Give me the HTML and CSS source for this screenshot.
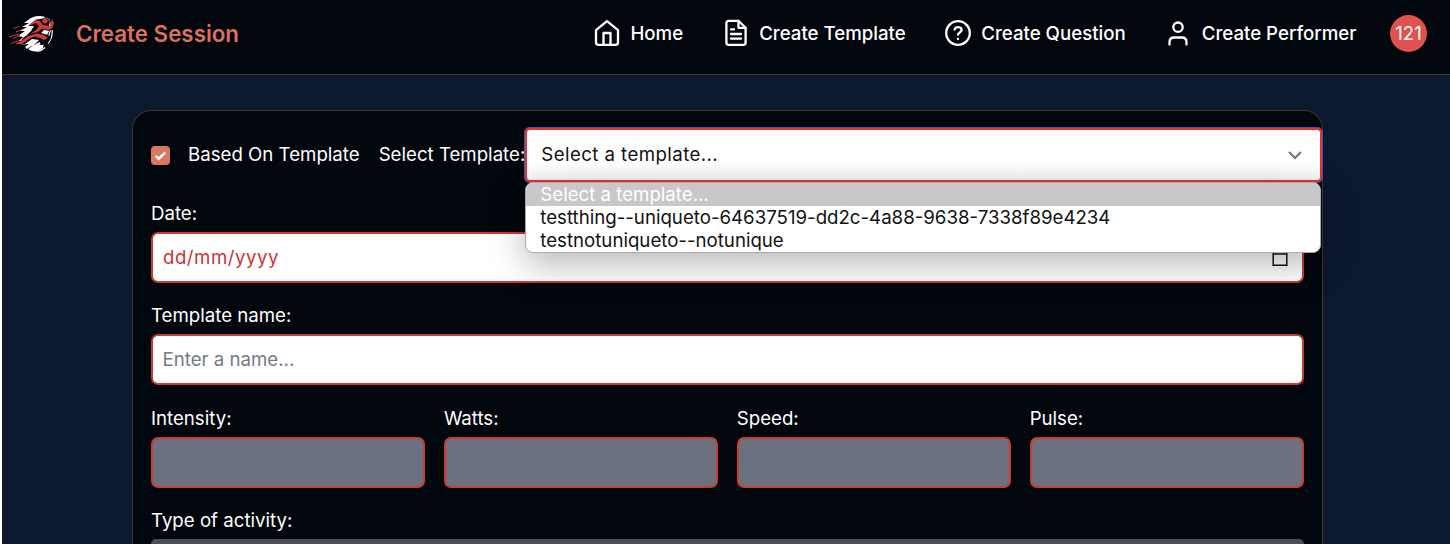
FILE: index.html
```html
<!DOCTYPE html>
<html lang="en">
<head>
<meta charset="utf-8">
<title>Create Session</title>
<link rel="stylesheet" href="styles.css">
</head>
<body>
<header class="topbar">
  <svg class="logo" viewBox="7 12 47 41" fill="none">
    <path fill="#fff" d="M27 19Q32 15 38 15Q45 15 49 19L50 26L46 34L48 36L43 41L42 47L36 50.500Q31 51 27 48L33 45L24 46L28 43L18 44L22 41L18 40L22 36L17 35L24 30L19 30L26 26L21 26L28 22L23 22Z"/>
    <path d="M51.300 29Q51.500 37 47 42.500M49.500 29Q48.500 35 44.500 40M44 46.500Q41 49.500 36 50.500" stroke="#fff" stroke-width="1.200"/>
    <path fill="#02060d" d="M27 25L35 18.500L40 18L45 16L49 20L48 25L52 24L49 30L43 29L40 32L47 34L50 37L47 42L41 44L33 44L38 39L31 38L24 43L15 45L22 37L26 34L30 30L33 25Z"/>
    <g fill="#d03a3c">
      <path d="M27 25L34 19L39 20L42 24L49 25L51 18L53 22L51 27.500L47 29L41 27.500L37 31L29 33L35 29L38 25L35 22Z"/>
      <path d="M20 40L27 35L36 32.500L43 34L47 37L43 39L39 37L34 35.500L28 38L21 43L15 43Z"/>
      <circle cx="44" cy="19.800" r="2.700"/>
    </g>
    <path d="M25 47L34 41M29 48L39 42" stroke="#fff" stroke-width="2.600"/>
    <path d="M12.500 27.500L18 25.500M15 31L21 28.500M8 36L18 33M12 37.500L19 34.500M10 42.500L18 39.500M15 43L21 40" stroke="#d03a3c" stroke-width="1"/>
  </svg>
  <h1 class="page-title">Create Session</h1>
  <nav class="nav">
    <a class="nav-link home"><svg class="icon" viewBox="0 0 28 28"><path d="M3 11.2 14 2.2l11 9v12q0 2.6-2.6 2.6H5.6Q3 25.800 3 23.200Z"/><path d="M10.500 25.500V14h7v11.500"/></svg><span>Home</span></a>
    <a class="nav-link template"><svg class="icon" viewBox="0 0 28 28"><path d="M16.500 1.800H6.800q-2.400 0-2.400 2.400v19.200q0 2.400 2.400 2.400h14.400q2.400 0 2.400-2.400V8.800Z"/><path d="M16.500 1.800v7h7M9 10.300h3M9 15h10M9 19.700h10"/></svg><span>Create Template</span></a>
    <a class="nav-link question"><svg class="icon" viewBox="0 0 28 28"><circle cx="14" cy="14" r="11.800"/><path d="M10.600 10.500c1.100-3.700 7-3 7 .6 0 2.200-3.500 2.300-3.500 4.600M14 20h.02"/></svg><span>Create Question</span></a>
    <a class="nav-link performer"><svg class="icon" viewBox="0 0 28 28"><circle cx="14" cy="8.200" r="4.700"/><path d="M5.500 25.500v-2.300q0-4.700 4.700-4.700h7.600q4.700 0 4.700 4.700v2.300"/></svg><span>Create Performer</span></a>
  </nav>
  <div class="avatar">121</div>
</header>
<main class="page">
  <form class="card">
    <div class="template-row">
      <span class="checkbox"><svg viewBox="0 0 16 16"><path d="m4 8.300 2.600 2.500L12 5.300"/></svg></span>
      <label class="based-on">Based On Template</label>
      <label class="select-label">Select Template:</label>
      <div class="select">
        <span class="value">Select a template...</span>
        <svg class="chevron" viewBox="0 0 16 10"><path d="m2 2 6 6 6-6"/></svg>
        <ul class="options">
          <li class="option selected">Select a template...</li>
          <li class="option">testthing--uniqueto-64637519-dd2c-4a88-9638-7338f89e4234</li>
          <li class="option">testnotuniqueto--notunique</li>
        </ul>
      </div>
    </div>
    <div class="field">
      <label>Date:</label>
      <div class="input date"><span>dd/mm/yyyy</span><svg class="calendar" viewBox="0 0 16 18"><path d="M1.200 3h13.600v13.300H1.200zM1.200 5h13.600M4 1v2M12 1v2"/></svg></div>
    </div>
    <div class="field">
      <label>Template name:</label>
      <div class="input placeholder">Enter a name...</div>
    </div>
    <div class="metrics">
      <div class="field"><label>Intensity:</label><div class="input disabled"></div></div>
      <div class="field"><label>Watts:</label><div class="input disabled"></div></div>
      <div class="field"><label>Speed:</label><div class="input disabled"></div></div>
      <div class="field"><label>Pulse:</label><div class="input disabled"></div></div>
    </div>
    <div class="field last">
      <label>Type of activity:</label>
      <div class="input activity"></div>
    </div>
  </form>
</main>
</body>
</html>
```
FILE: styles.css
```css
* { box-sizing: border-box; }
body {
  display: flex;
  flex-direction: column;
  margin: 0;
  height: 544px;
  overflow: hidden;
  border-left: 2px solid #fff;
  background: #0c182e;
  color: #fff;
  font: 400 18.67px/28px Inter, sans-serif;
}
.topbar {
  display: flex;
  flex: none;
  align-items: center;
  height: 75px;
  padding: 0 23px 8px 6px;
  background: #02060d;
  border-bottom: 1px solid #49313a;
}
.logo { width: 47px; height: 41px; flex: none; }
.page-title {
  margin: 0 auto 0 21px;
  padding-top: 1px;
  color: #dc705e;
  font-size: 22.35px;
  font-weight: 600;
  line-height: 30px;
}
.nav { display: flex; align-items: center; }
.nav-link { display: flex; align-items: center; font-weight: 500; white-space: nowrap; }
.nav-link span { padding-top: 1px; }
.icon {
  width: 28px;
  height: 28px;
  margin-right: 9.500px;
  fill: none;
  stroke: #fff;
  stroke-width: 2.300;
  stroke-linecap: round;
  stroke-linejoin: round;
}
.home .icon { margin-right: 9px; }
.home { margin-right: 38.500px; }
.template { margin-right: 38px; }
.question { margin-right: 38.500px; }
.avatar {
  width: 37px;
  height: 37px;
  margin-left: 33.500px;
  border-radius: 50%;
  background: #df524e;
  line-height: 37px;
  text-align: center;
}
.page { flex: 1; min-height: 0; padding: 35px 127px 0 130px; }
.card {
  display: flex;
  flex-direction: column;
  height: 100%;
  padding: 16px 18px 0;
  border: 1px solid #49313a;
  border-bottom: 0;
  border-radius: 19px 19px 0 0;
  background: #02060d;
}
.template-row {
  display: flex;
  align-items: center;
  flex: none;
  height: 56px;
  margin: 0 -19px 16px 0;
  white-space: nowrap;
}
.checkbox {
  width: 19px;
  height: 19px;
  margin-right: 18px;
  border-radius: 4px;
  background: #dc7766;
}
.checkbox svg { display: block; fill: none; stroke: #fff; stroke-width: 2; }
.based-on { margin-right: 19px; }
.select {
  position: relative;
  display: flex;
  align-items: center;
  justify-content: space-between;
  flex: 1;
  height: 56px;
  margin-left: -1px;
  padding: 0 17px 0 14px;
  border: 3px solid #e5332e;
  border-radius: 6px;
  outline: 1px solid #3458c8;
  outline-offset: -1px;
  background: linear-gradient(#fff 65%, #f3f3f3);
  color: #111;
}
.value { letter-spacing: .42px; }
.chevron { width: 16px; height: 10px; fill: none; stroke: #6b7280; stroke-width: 2; }
.options {
  position: absolute;
  z-index: 2;
  top: 52px;
  left: -2px;
  right: -1px;
  height: 71px;
  margin: 0;
  padding: 0;
  overflow: hidden;
  border: 1px solid #aaa;
  border-radius: 8px;
  background: #fff;
  box-shadow: 0 12px 35px rgba(0, 0, 0, .28);
  list-style: none;
}
.option { height: 23px; padding-left: 14px; line-height: 23px; }
.selected { background: #c8c8c8; color: #fff; }
.field { flex: none; margin-bottom: 18.300px; }
.field label { display: block; padding-top: 1px; line-height: 27px; }
.input {
  display: flex;
  align-items: center;
  height: 51px;
  margin-top: 5px;
  padding: 0 10px;
  border: 2.400px solid #c93b34;
  border-radius: 7px;
  background: #fff;
}
.date { justify-content: space-between; padding-right: 14px; color: #cb3436; }
.date span { letter-spacing: .5px; }
.calendar { width: 16px; height: 18px; fill: none; stroke: #111; stroke-width: 1.500; }
.placeholder { padding-left: 9.500px; color: #737983; }
.disabled { background: #6b717e; }
.metrics { display: grid; flex: none; grid-template-columns: repeat(4, 1fr); gap: 18.500px; }
.metrics .field { min-width: 0; }
.last { display: flex; flex: 1; flex-direction: column; min-height: 0; margin: 0; }
.activity {
  flex: 1;
  height: auto;
  padding: 0;
  border: 0;
  border-radius: 5px 5px 0 0;
  background: #4b4f5a;
}
```
